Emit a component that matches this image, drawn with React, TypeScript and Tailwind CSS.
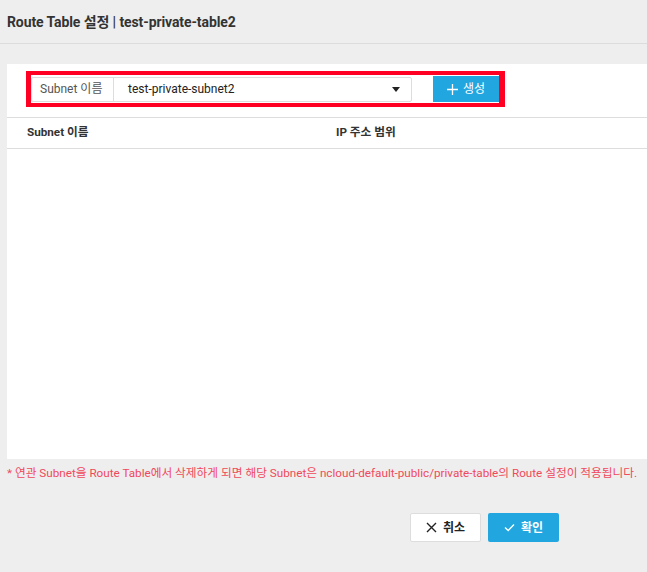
import React from "react";

const font = { fontFamily: "Roboto, 'Noto Sans CJK KR', sans-serif" };

export default function App() {
  return (
    <div className="w-[647px] h-[572px] bg-[#eeeeee] overflow-hidden text-[#333]" style={font}>
      <div className="h-[44px] border-b border-[#dcdcdc] flex items-center pl-[7px] pt-[1px]">
        <h1 className="text-[14px] font-bold text-[#333] tracking-[-0.1px]">Route Table 설정 | test-private-table2</h1>
      </div>
      <div className="ml-[7px] mt-[20px] h-[395px] bg-white flex flex-col">
        <div className="pt-[7px] pl-[19px]">
          <div className="w-[479px] h-[36px] border-[#ff0022] border-t-[4px] border-b-[4px] border-l-[5px] border-r-[6px] flex items-center">
            <div className="w-[381px] h-[25px] border border-[#dddddd] rounded-[2px] flex items-center">
              <div className="w-[82px] h-full border-r border-[#dddddd] pl-[8px] flex items-center text-[12px] text-[#555]">Subnet 이름</div>
              <div className="flex-1 flex items-center pl-[14px] pr-[11px] text-[12px] text-[#222]">
                <span className="flex-1">test-private-subnet2</span>
                <svg width="8" height="5" viewBox="0 0 8 5"><path d="M0 0h8L4 5z" fill="#222" /></svg>
              </div>
            </div>
            <div className="ml-[21px] w-[66px] h-[26px] bg-[#22a6e0] flex items-center justify-center gap-[5px] text-white text-[12px]">
              <svg width="11" height="11" viewBox="0 0 11 11"><path d="M5.5 0v11M0 5.5h11" stroke="#fff" strokeWidth="1.3" /></svg>
              <span>생성</span>
            </div>
          </div>
        </div>
        <div className="mt-[10px] h-[32px] border-t border-b border-[#dddddd] flex items-center text-[11.7px] font-bold text-[#333]">
          <div className="w-[329px] pl-[20px]">Subnet 이름</div>
          <div>IP 주소 범위</div>
        </div>
        <div className="flex-1" />
      </div>
      <div className="pl-[7px] mt-[6px] text-[11.7px] text-[#f0495b] leading-[16px] whitespace-nowrap">
        * 연관 Subnet을 Route Table에서 삭제하게 되면 해당 Subnet은 ncloud-default-public/private-table의 Route 설정이 적용됩니다.
      </div>
      <div className="mt-[32px] flex justify-end gap-[7px] pr-[88px]">
        <button className="w-[71px] h-[29px] bg-white border border-[#dddddd] rounded-[2px] flex items-center justify-center gap-[6px] text-[12px] font-bold text-[#222]">
          <svg width="11" height="11" viewBox="0 0 11 11"><path d="M1 1l9 9M10 1l-9 9" stroke="#222" strokeWidth="1.4" /></svg>
          <span>취소</span>
        </button>
        <button className="w-[71px] h-[29px] bg-[#22a6e0] rounded-[2px] flex items-center justify-center gap-[6px] text-[12px] font-bold text-white">
          <svg width="11" height="9" viewBox="0 0 11 9"><path d="M1 4.5l3.2 3L10 1.5" stroke="#fff" strokeWidth="1.3" fill="none" /></svg>
          <span>확인</span>
        </button>
      </div>
    </div>
  );
}
